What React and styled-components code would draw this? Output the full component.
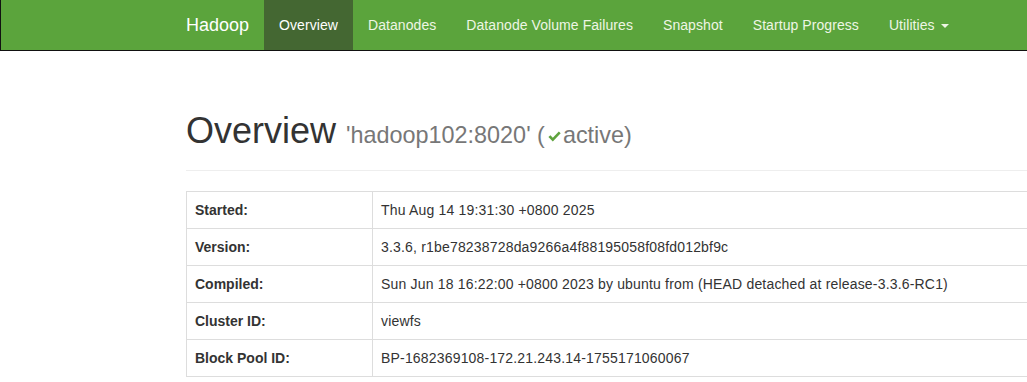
import React from 'react';
import { styled, createGlobalStyle } from 'styled-components';

const GlobalStyle = createGlobalStyle`
  html, body {
    margin: 0;
    padding: 0;
    background: #fff;
    overflow: hidden;
  }

  body {
    font-family: "Liberation Sans", Arial, Helvetica, sans-serif;
    font-size: 14px;
    line-height: 1.42857;
    color: #333;
  }
`;

const navItems = [
  'Overview',
  'Datanodes',
  'Datanode Volume Failures',
  'Snapshot',
  'Startup Progress',
];

const rows = [
  ['Started:', 'Thu Aug 14 19:31:30 +0800 2025'],
  ['Version:', '3.3.6, r1be78238728da9266a4f88195058f08fd012bf9c'],
  ['Compiled:', 'Sun Jun 18 16:22:00 +0800 2023 by ubuntu from (HEAD detached at release-3.3.6-RC1)'],
  ['Cluster ID:', 'viewfs'],
  ['Block Pool ID:', 'BP-1682369108-172.21.243.14-1755171060067'],
];

const App = () => {
  return (
    <>
      <GlobalStyle />
      <Navbar>
        <NavContainer>
          <Brand>Hadoop</Brand>
          <NavList>
            {navItems.map((item, i) => (
              <NavLink key={item} $active={i === 0}>
                {item}
              </NavLink>
            ))}
            <NavLink>
              Utilities
              <Caret />
            </NavLink>
          </NavList>
        </NavContainer>
      </Navbar>

      <Container>
        <PageHeader>
          <Title>
            Overview{' '}
            <Sub>
              'hadoop102:8020' (
              <CheckIcon viewBox="0 0 16 16">
                <path d="M1.5 8.6 L3.6 6.6 L6.2 9.2 L12.6 2.6 L14.6 4.6 L6.2 13.2 Z" fill="#5fa33e" />
              </CheckIcon>
              active)
            </Sub>
          </Title>
        </PageHeader>

        <InfoTable>
          <tbody>
            {rows.map(([label, value]) => (
              <tr key={label}>
                <Th>{label}</Th>
                <Td>{value}</Td>
              </tr>
            ))}
          </tbody>
        </InfoTable>
      </Container>
    </>
  );
};

export default App;

const Navbar = styled.nav`
  height: 50px;
  background: #5ba43c;
  border-left: 1px solid #111;
  border-bottom: 1px solid #111;
`;

const NavContainer = styled.div`
  display: flex;
  align-items: stretch;
  height: 50px;
  margin-left: 170px;
`;

const Brand = styled.a`
  display: block;
  padding: 15px;
  height: 20px;
  font-size: 18px;
  line-height: 20px;
  color: #fff;
`;

const NavList = styled.ul`
  display: flex;
  margin: 0;
  padding: 0;
  list-style: none;
`;

const NavLink = styled.li`
  display: flex;
  align-items: center;
  padding: 15px;
  line-height: 20px;
  letter-spacing: 0.07px;
  color: ${(p) => (p.$active ? '#fff' : '#eef6e4')};
  background: ${(p) => (p.$active ? '#446732' : 'transparent')};
`;

const Caret = styled.span`
  display: inline-block;
  width: 0;
  height: 0;
  margin-left: 6px;
  margin-top: 2px;
  border-top: 4px solid #eef6e4;
  border-left: 4px solid transparent;
  border-right: 4px solid transparent;
`;

const Container = styled.div`
  width: 1140px;
  margin-left: 186px;
`;

const PageHeader = styled.div`
  margin: 60px 0 20px;
  padding-bottom: 14px;
  border-bottom: 1px solid #eee;
`;

const Title = styled.h1`
  margin: 0;
  font-size: 36px;
  font-weight: 400;
  line-height: 39.6px;
  color: #333;
`;

const Sub = styled.small`
  font-size: 65%;
  font-weight: 400;
  color: #777;
`;

const CheckIcon = styled.svg`
  width: 15px;
  height: 15px;
  margin: 0 1px 0 2px;
  vertical-align: -1px;
`;

const InfoTable = styled.table`
  width: 100%;
  border-collapse: collapse;
  border: 1px solid #ddd;
`;

const Th = styled.th`
  width: 169px;
  padding: 8px;
  border: 1px solid #ddd;
  text-align: left;
  font-weight: 700;
  line-height: 20px;
`;

const Td = styled.td`
  padding: 8px;
  border: 1px solid #ddd;
  line-height: 20px;
  letter-spacing: 0.18px;
`;
